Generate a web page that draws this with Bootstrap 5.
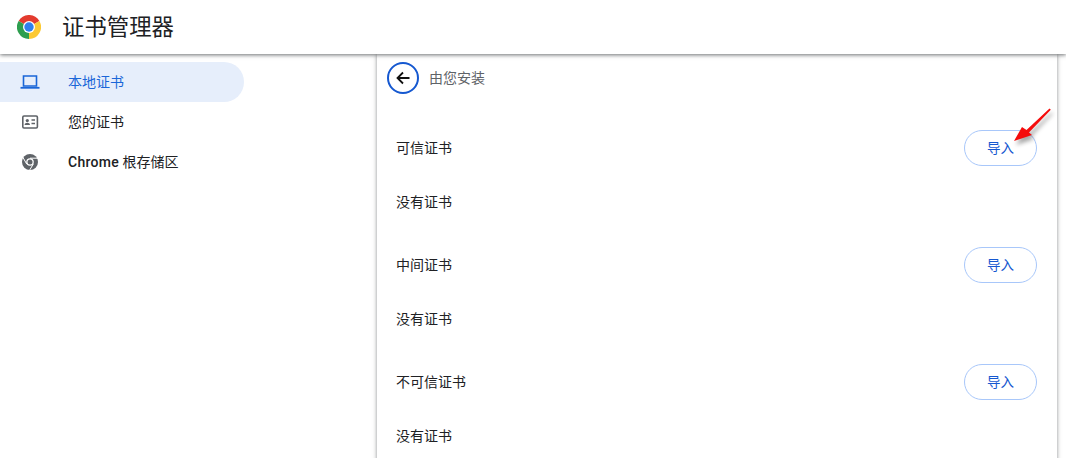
<!DOCTYPE html>
<html lang="zh-CN">
<head>
<meta charset="utf-8">
<title>证书管理器</title>
<link href="https://cdn.jsdelivr.net/npm/bootstrap@5.3.0/dist/css/bootstrap.min.css" rel="stylesheet">
<style>
html,body{height:458px;overflow:hidden;background:#fff;}
body{font-family:"Roboto","Noto Sans CJK SC",sans-serif;color:#202124;font-size:14px;position:relative;}
.top-bar{height:54px;background:#fff;box-shadow:0 1px 4px rgba(60,64,67,.75);position:relative;z-index:2;padding-left:17px;gap:22px;}
.top-title{font-size:22.4px;line-height:30px;color:#202124;font-weight:400;margin:0 0 0 -1px;}
.page-body{height:404px;overflow:hidden;}
.side-nav{width:377px;padding-top:8px;flex:none;}
.side-item{width:244px;height:40px;padding-left:20px;gap:28px;color:#202124;font-size:14px;border-radius:0 20px 20px 0;}
.side-item.is-on{background:#e6eefb;color:#1a66d8;}
.side-item svg{width:20px;height:20px;flex:none;}
.chrome-word{font-weight:500;letter-spacing:.3px;}
.main-sheet{width:680px;flex:none;box-shadow:0 0 4px rgba(60,64,67,.6);background:#fff;padding:0 20px 0 19px;height:420px;}
.back-row{height:48px;margin-left:-9px;gap:10px;margin-bottom:28px;color:#5f6368;font-size:14px;}
.back-circle{width:32px;height:32px;border:2px solid #1558d0;border-radius:50%;background:#fff;padding:0;}
.sec-row{height:36px;}
.sec-title{font-size:14px;color:#202124;}
.import-btn{width:73px;height:36px;border:1px solid #a8c7fa;border-radius:18px;color:#1558d0;background:#fff;font-size:13.5px;padding:2px 0 0;line-height:1;}
.empty-note{font-size:14px;line-height:20px;margin-top:26px;margin-bottom:35px;color:#202124;}
section:last-child .empty-note{margin-bottom:0;}
.red-arrow{position:absolute;left:1008px;top:103px;z-index:3;filter:drop-shadow(2px 4px 2px rgba(0,0,0,.35));}
</style>
</head>
<body>
<header class="top-bar d-flex align-items-center">
  <svg width="24" height="24" viewBox="0 0 24 24">
    <path d="M12 12 L1.6 6 A12 12 0 0 1 22.4 6 Z" fill="#e33b2e"/>
    <path d="M12 12 L22.4 6 A12 12 0 0 1 12 24 Z" fill="#fcc934"/>
    <path d="M12 12 L12 24 A12 12 0 0 1 1.6 6 Z" fill="#2e9e4f"/>
    <circle cx="12" cy="12" r="6" fill="#fff"/>
    <circle cx="12" cy="12" r="4.7" fill="#2f7fed"/>
  </svg>
  <h1 class="top-title">证书管理器</h1>
</header>
<div class="page-body d-flex">
  <nav class="side-nav d-flex flex-column">
    <div class="side-item is-on d-flex align-items-center">
      <svg viewBox="0 0 20 20"><path d="M3.500 4h13v10h-13z" fill="none" stroke="#1a66d8" stroke-width="1.600"/><path d="M0.500 15.800h19" stroke="#1a66d8" stroke-width="1.800"/></svg>
      <span>本地证书</span>
    </div>
    <div class="side-item d-flex align-items-center">
      <svg viewBox="0 0 20 20"><rect x="2.800" y="4" width="14.600" height="12" rx="1.200" fill="none" stroke="#5f6368" stroke-width="1.600"/><circle cx="7.300" cy="8.600" r="1.600" fill="#5f6368"/><path d="M4.600 13c0-1.600 1.400-2.300 2.700-2.300S10 11.400 10 13z" fill="#5f6368"/><path d="M11.500 8h3.500M11.500 11.500h3.500" stroke="#5f6368" stroke-width="1.500"/></svg>
      <span>您的证书</span>
    </div>
    <div class="side-item d-flex align-items-center">
      <svg viewBox="0 0 20 20"><circle cx="10" cy="10" r="8" fill="#5f6368"/><path d="M10 6.200H18.500M6.700 12 2.400 4.500M13.300 12 8.800 19.500" stroke="#fff" stroke-width="1"/><circle cx="10" cy="10" r="3.800" fill="#fff"/><circle cx="10" cy="10" r="2.500" fill="#5f6368"/></svg>
      <span><span class="chrome-word">Chrome</span> 根存储区</span>
    </div>
  </nav>
  <main class="main-sheet">
    <div class="back-row d-flex align-items-center">
      <button class="back-circle d-flex align-items-center justify-content-center" type="button" aria-label="返回">
        <svg width="16" height="16" viewBox="0 0 16 16"><path d="M14.500 8H2.500M8 2.500 2.500 8 8 13.500" fill="none" stroke="#111" stroke-width="1.800"/></svg>
      </button>
      <span>由您安装</span>
    </div>
    <section>
      <div class="sec-row d-flex align-items-center justify-content-between"><span class="sec-title">可信证书</span><button class="import-btn" type="button">导入</button></div>
      <div class="empty-note">没有证书</div>
    </section>
    <section>
      <div class="sec-row d-flex align-items-center justify-content-between"><span class="sec-title">中间证书</span><button class="import-btn" type="button">导入</button></div>
      <div class="empty-note">没有证书</div>
    </section>
    <section>
      <div class="sec-row d-flex align-items-center justify-content-between"><span class="sec-title">不可信证书</span><button class="import-btn" type="button">导入</button></div>
      <div class="empty-note">没有证书</div>
    </section>
  </main>
</div>
<svg class="red-arrow" width="50" height="45" viewBox="0 0 50 45">
  <path d="M6 38 L14 24 L18.500 27 L41.500 5.500 L42.800 6.800 L21 29.500 L24 32 Z" fill="#f50c0c"/>
</svg>
<script src="https://cdn.jsdelivr.net/npm/bootstrap@5.3.0/dist/js/bootstrap.bundle.min.js"></script>
</body>
</html>
